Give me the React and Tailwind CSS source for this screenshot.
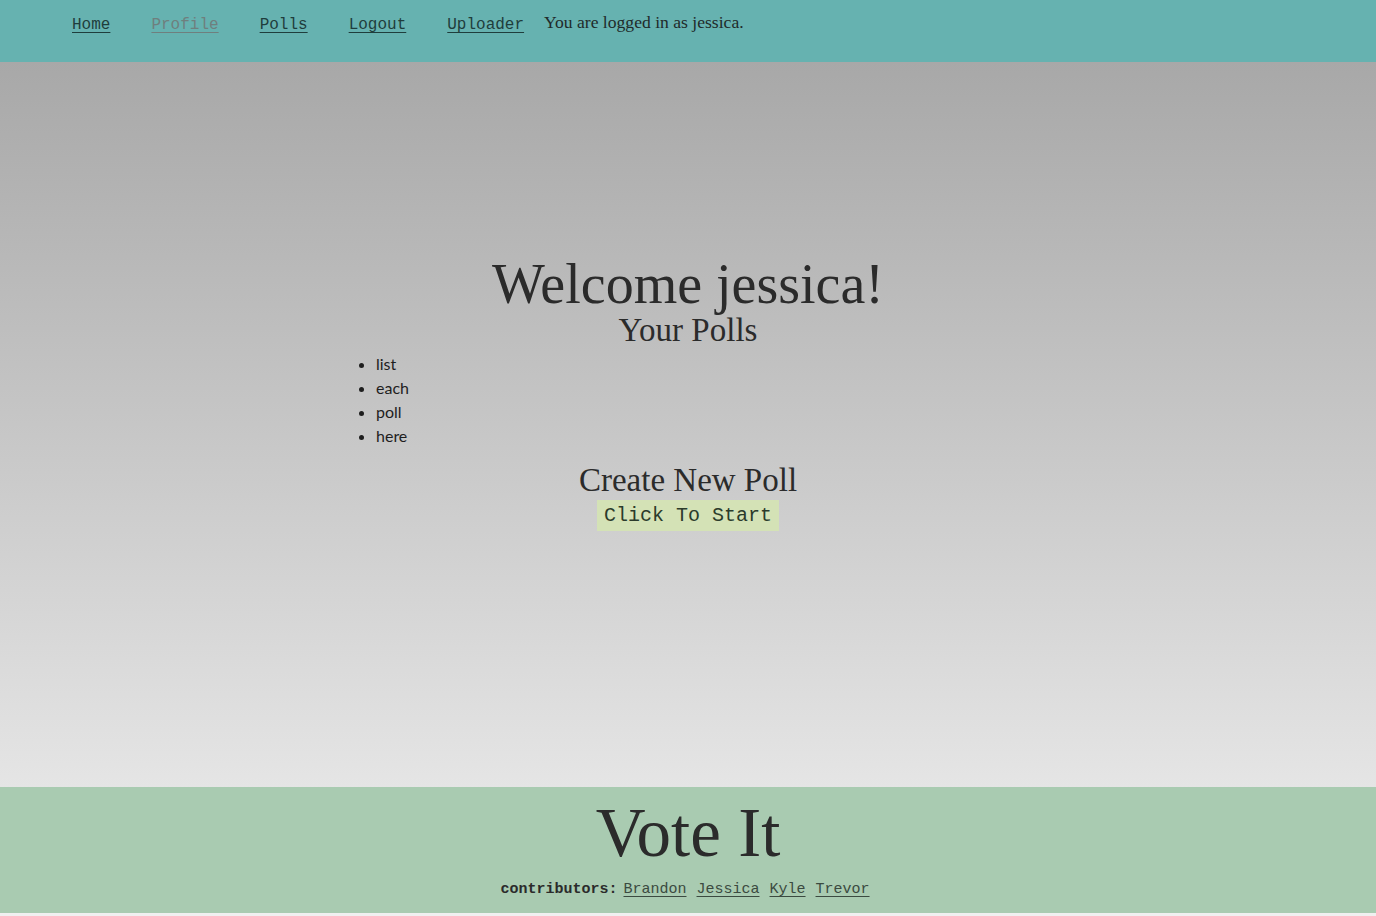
const navLinks = [
    { label: "Home", visited: false },
    { label: "Profile", visited: true },
    { label: "Polls", visited: false },
    { label: "Logout", visited: false },
    { label: "Uploader", visited: false },
];

const contributors = ["Brandon", "Jessica", "Kyle", "Trevor"];

const pollItems = ["list", "each", "poll", "here"];

const App = () => {
    return (
        <div className="min-h-[916px] flex flex-col bg-[#f0f0f0] text-[#2b2b2b] font-['Liberation_Serif',serif]">
            <header className="h-[62px] bg-[#66b2b0] flex items-start pt-[14px] pl-[72px]">
                <nav className="flex items-start">
                    {navLinks.map((link) => (
                        <a
                            key={link.label}
                            href="#"
                            className={`mr-[41px] font-['Liberation_Mono',monospace] text-[16px] leading-[22px] underline underline-offset-[3px] ${link.visited ? 'text-[#6f7f7e]' : 'text-[#1f3d3c]'}`}
                        >
                            {link.label}
                        </a>
                    ))}
                    <span className="-ml-[21px] text-[17.6px] leading-[17px] text-[#1f2a2a]">
                        You are logged in as jessica.
                    </span>
                </nav>
            </header>

            <main className="h-[725px] bg-gradient-to-b from-[#a8a8a8] to-[#e5e5e5] pt-[193px]">
                <div className="w-[704px] mx-auto">
                    <h1 className="text-center text-[56px] leading-[58px]">Welcome jessica!</h1>
                    <h2 className="text-center text-[33px] leading-[35px]">Your Polls</h2>
                    <ul className="list-disc pl-[40px] mt-[4px] font-['Lato',sans-serif] text-[16px] leading-[24px] text-[#1e1e1e]">
                        {pollItems.map((item) => (
                            <li key={item}>{item}</li>
                        ))}
                    </ul>
                    <h2 className="text-center text-[33px] leading-[36px] mt-[14px]">Create New Poll</h2>
                    <div className="flex justify-center mt-[2px]">
                        <button className="bg-[#d4e2b6] px-[7px] h-[31px] font-['Liberation_Mono',monospace] text-[20px] leading-[31px] text-[#2b3b2b]">
                            Click To Start
                        </button>
                    </div>
                </div>
            </main>

            <footer className="h-[126px] bg-[#a9cbb1] flex flex-col items-center">
                <div className="text-[69px] leading-[76px] mt-[8px]">Vote It</div>
                <div className="mt-[10px] -ml-[6px] font-['Liberation_Mono',monospace] text-[15px] leading-[18px]">
                    <span className="font-bold">contributors:</span>
                    {contributors.map((name, i) => (
                        <a
                            key={name}
                            href="#"
                            className={`${i === 0 ? 'ml-[6px]' : 'ml-[10px]'} underline underline-offset-[3px] text-[#3b4a40]`}
                        >
                            {name}
                        </a>
                    ))}
                </div>
            </footer>
        </div>
    );
};

export default App;
